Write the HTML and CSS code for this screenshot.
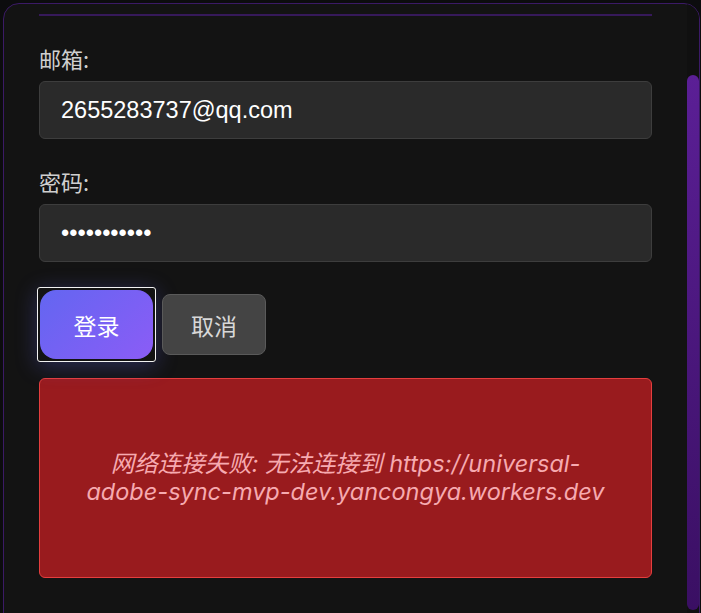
FILE: index.html
```html
<!DOCTYPE html>
<html lang="zh-CN">
<head>
<meta charset="utf-8">
<title>登录</title>
<link rel="stylesheet" href="styles.css">
</head>
<body>
<div class="card">
  <div class="content">
    <div class="divider"></div>
    <div class="group">
      <label class="label">邮箱:</label>
      <input class="field" type="text" value="2655283737@qq.com">
    </div>
    <div class="group">
      <label class="label">密码:</label>
      <input class="field pw" type="password" value="12345678901">
    </div>
    <div class="actions">
      <div class="focus-ring"><button class="btn-login">登录</button></div>
      <button class="btn-cancel">取消</button>
    </div>
    <div class="error">网络连接失败: 无法连接到 https://universal-adobe-sync-mvp-dev.yancongya.workers.dev</div>
  </div>
  <div class="track"><div class="thumb"></div></div>
</div>
</body>
</html>
```
FILE: styles.css
```css
* { box-sizing: border-box; }
html, body { margin: 0; padding: 0; }
body {
  background: #0c0c0e;
  width: 701px;
  height: 613px;
  overflow: hidden;
  font-family: "Noto Sans CJK SC", "Noto Sans", sans-serif;
}
.card {
  margin: 3px 0 0 3px;
  width: 697px;
  height: 640px;
  border: 1px solid #3b1a66;
  border-radius: 16px;
  background: #131313;
  display: flex;
  overflow: hidden;
}
.content {
  flex: 1;
  padding: 10px 35px 0 35px;
}
.divider {
  height: 2px;
  background: #36195a;
  margin-bottom: 28px;
}
.group {
  display: flex;
  flex-direction: column;
  gap: 8px;
  margin-bottom: 28px;
}
.group + .actions { margin-top: -3px; }
.label {
  font-family: "Noto Sans CJK SC", sans-serif;
  font-size: 22px;
  line-height: 29px;
  color: #cfcfcf;
}
.field {
  height: 58px;
  width: 100%;
  background: #2a2a2a;
  border: 1px solid #3d3d3d;
  border-radius: 6px;
  padding: 0 21px;
  color: #ffffff;
  font-family: "Liberation Sans", Arial, sans-serif;
  font-size: 23.5px;
  outline: none;
}
.actions {
  display: flex;
  align-items: center;
  gap: 6px;
  height: 75px;
  margin-bottom: 16px;
}
.focus-ring {
  border: 1px solid #f2f2f2;
  border-radius: 3px;
  padding: 2px;
  margin-left: -2px;
  box-shadow: 0 4px 22px rgba(99, 102, 241, 0.3);
}
.btn-login {
  display: block;
  width: 113px;
  height: 69px;
  border: none;
  border-radius: 16px;
  background: linear-gradient(135deg, #6366f1, #8b5cf6);
  color: #ffffff;
  font-family: "Noto Sans CJK SC", sans-serif;
  font-size: 23px;
}
.btn-cancel {
  width: 104px;
  height: 61px;
  border: 1px solid #5a5a5a;
  border-radius: 8px;
  background: #444444;
  color: #d8d8d8;
  font-family: "Noto Sans CJK SC", sans-serif;
  font-size: 23px;
}
.error {
  height: 200px;
  background: #991b1e;
  border: 1px solid #e53e3e;
  border-radius: 6px;
  display: flex;
  align-items: center;
  justify-content: center;
  text-align: center;
  padding: 0 40px;
  color: #f6aab0;
  font-family: Inter, "Noto Sans CJK SC", sans-serif;
  font-style: italic;
  font-size: 23.5px;
  line-height: 28px;
}
.track {
  width: 12px;
  background: #101010;
  padding-top: 71px;
}
.thumb {
  height: 535px;
  border-radius: 6px;
  background: linear-gradient(180deg, #5b1f96, #3a0f63);
}
```
